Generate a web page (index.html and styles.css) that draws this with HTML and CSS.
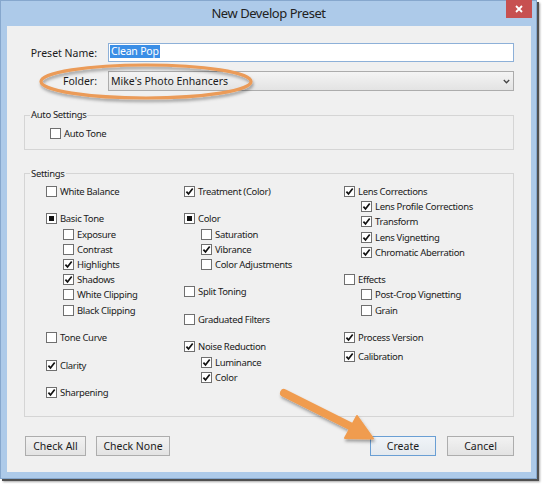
FILE: index.html
```html
<!DOCTYPE html>
<html>
<head>
<meta charset="utf-8">
<title>New Develop Preset</title>
<link rel="stylesheet" href="styles.css">
</head>
<body>
<div class="window">
  <div class="titlebar">
    <span class="title">New Develop Preset</span>
    <div class="close"><svg width="26" height="18" viewBox="0 0 26 18"><path d="M10 6 L16 12 M16 6 L10 12" stroke="#fff" stroke-width="1.8" fill="none"/></svg></div>
  </div>
  <div class="client">
    <div class="field name">
      <label>Preset Name:</label>
      <div class="input"><span class="sel">Clean Pop</span></div>
    </div>
    <div class="field folder">
      <label>Folder:</label>
      <div class="select"><span>Mike's Photo Enhancers</span><svg class="chev" width="7" height="5" viewBox="0 0 7 5"><path d="M0.8 1 L3.5 3.8 L6.2 1" stroke="#444" stroke-width="1.3" fill="none"/></svg></div>
    </div>

    <fieldset class="group auto">
      <legend>Auto Settings</legend>
      <div class="body">
        <div class="cb"><span class="box"></span><span>Auto Tone</span></div>
      </div>
    </fieldset>

    <fieldset class="group settings">
      <legend>Settings</legend>
      <div class="body">
        <div class="col">
          <div class="cb"><span class="box"></span><span>White Balance</span></div>
          <div class="cb t"><span class="box ind"></span><span>Basic Tone</span></div>
          <div class="cb s"><span class="box"></span><span>Exposure</span></div>
          <div class="cb s"><span class="box"></span><span>Contrast</span></div>
          <div class="cb s"><span class="box on"><svg viewBox="0 0 9 9"><path d="M1.4 4.6 L3.5 6.9 L7.7 1.5"/></svg></span><span>Highlights</span></div>
          <div class="cb s"><span class="box on"><svg viewBox="0 0 9 9"><path d="M1.4 4.6 L3.5 6.9 L7.7 1.5"/></svg></span><span>Shadows</span></div>
          <div class="cb s"><span class="box"></span><span>White Clipping</span></div>
          <div class="cb s"><span class="box"></span><span>Black Clipping</span></div>
          <div class="cb t"><span class="box"></span><span>Tone Curve</span></div>
          <div class="cb t"><span class="box on"><svg viewBox="0 0 9 9"><path d="M1.4 4.6 L3.5 6.9 L7.7 1.5"/></svg></span><span>Clarity</span></div>
          <div class="cb t"><span class="box on"><svg viewBox="0 0 9 9"><path d="M1.4 4.6 L3.5 6.9 L7.7 1.5"/></svg></span><span>Sharpening</span></div>
        </div>
        <div class="col">
          <div class="cb"><span class="box on"><svg viewBox="0 0 9 9"><path d="M1.4 4.6 L3.5 6.9 L7.7 1.5"/></svg></span><span>Treatment (Color)</span></div>
          <div class="cb t"><span class="box ind"></span><span>Color</span></div>
          <div class="cb s"><span class="box"></span><span>Saturation</span></div>
          <div class="cb s"><span class="box on"><svg viewBox="0 0 9 9"><path d="M1.4 4.6 L3.5 6.9 L7.7 1.5"/></svg></span><span>Vibrance</span></div>
          <div class="cb s"><span class="box"></span><span>Color Adjustments</span></div>
          <div class="cb t"><span class="box"></span><span>Split Toning</span></div>
          <div class="cb t"><span class="box"></span><span>Graduated Filters</span></div>
          <div class="cb t"><span class="box on"><svg viewBox="0 0 9 9"><path d="M1.4 4.6 L3.5 6.9 L7.7 1.5"/></svg></span><span>Noise Reduction</span></div>
          <div class="cb s"><span class="box on"><svg viewBox="0 0 9 9"><path d="M1.4 4.6 L3.5 6.9 L7.7 1.5"/></svg></span><span>Luminance</span></div>
          <div class="cb s"><span class="box on"><svg viewBox="0 0 9 9"><path d="M1.4 4.6 L3.5 6.9 L7.7 1.5"/></svg></span><span>Color</span></div>
        </div>
        <div class="col">
          <div class="cb"><span class="box on"><svg viewBox="0 0 9 9"><path d="M1.4 4.6 L3.5 6.9 L7.7 1.5"/></svg></span><span>Lens Corrections</span></div>
          <div class="cb s"><span class="box on"><svg viewBox="0 0 9 9"><path d="M1.4 4.6 L3.5 6.9 L7.7 1.5"/></svg></span><span>Lens Profile Corrections</span></div>
          <div class="cb s"><span class="box on"><svg viewBox="0 0 9 9"><path d="M1.4 4.6 L3.5 6.9 L7.7 1.5"/></svg></span><span>Transform</span></div>
          <div class="cb s"><span class="box on"><svg viewBox="0 0 9 9"><path d="M1.4 4.6 L3.5 6.9 L7.7 1.5"/></svg></span><span>Lens Vignetting</span></div>
          <div class="cb s"><span class="box on"><svg viewBox="0 0 9 9"><path d="M1.4 4.6 L3.5 6.9 L7.7 1.5"/></svg></span><span>Chromatic Aberration</span></div>
          <div class="cb t"><span class="box"></span><span>Effects</span></div>
          <div class="cb s"><span class="box"></span><span>Post-Crop Vignetting</span></div>
          <div class="cb s"><span class="box"></span><span>Grain</span></div>
          <div class="cb t"><span class="box on"><svg viewBox="0 0 9 9"><path d="M1.4 4.6 L3.5 6.9 L7.7 1.5"/></svg></span><span>Process Version</span></div>
          <div class="cb near"><span class="box on"><svg viewBox="0 0 9 9"><path d="M1.4 4.6 L3.5 6.9 L7.7 1.5"/></svg></span><span>Calibration</span></div>
        </div>
      </div>
    </fieldset>

    <div class="buttons">
      <div class="btn-group left">
        <button class="btn w61">Check All</button>
        <button class="btn w74">Check None</button>
      </div>
      <div class="btn-group right">
        <button class="btn w66 default">Create</button>
        <button class="btn w67">Cancel</button>
      </div>
    </div>
  </div>

  <svg class="annot" width="543" height="484" viewBox="0 0 543 484">
    <defs>
      <filter id="sh" x="-20%" y="-40%" width="140%" height="200%">
        <feDropShadow dx="1" dy="2.5" stdDeviation="1.4" flood-color="#000" flood-opacity="0.35"/>
      </filter>
    </defs>
    <ellipse cx="146" cy="81.5" rx="105" ry="16.5" fill="none" stroke="#eb9b58" stroke-width="3.2" filter="url(#sh)"/>
    <g filter="url(#sh)">
      <path d="M284 393 L355 428.5" stroke="#f09c4f" stroke-width="8" stroke-linecap="round" fill="none"/>
      <polygon points="357,416 373,438.5 345,438" fill="#f09c4f" stroke="#f09c4f" stroke-width="2" stroke-linejoin="round"/>
    </g>
  </svg>
</div>
</body>
</html>
```

FILE: styles.css
```css
* { box-sizing: border-box; }
html, body { margin: 0; padding: 0; background: #fff; }
body {
  width: 543px;
  height: 484px;
  overflow: hidden;
  font-family: "Noto Sans", "Open Sans", sans-serif;
  font-size: 9.5px;
  letter-spacing: -0.33px;
  color: #1b1b1b;
}
.window {
  position: relative;
  width: 537px;
  height: 479px;
  background: #adcae9;
  box-shadow: inset 0 0 0 1px #86a7cd, 2px 2px 0 #505050, 3px 3px 2px rgba(0,0,0,.35);
  display: flex;
  flex-direction: column;
}
.titlebar {
  height: 26px;
  display: flex;
  align-items: center;
  justify-content: center;
}
.title {
  font-size: 13px;
  letter-spacing: -0.45px;
  color: #222;
}
.close {
  position: absolute;
  top: 0;
  right: 5px;
  width: 26px;
  height: 18px;
  background: #c75050;
}
.close svg { display: block; }
.client {
  margin-left: 7px;
  width: 524px;
  height: 446px;
  background: #f0f0f0;
  display: flex;
  flex-direction: column;
}
.field {
  display: grid;
  grid-template-columns: 90px 406px;
  column-gap: 11px;
  align-items: center;
}
.field label {
  text-align: right;
  font-size: 10.5px;
  letter-spacing: 0;
}
.field.name { margin-top: 17px; height: 19px; }
.field.folder { margin-top: 9px; height: 20px; }
.input {
  height: 19px;
  border: 1px solid #8db0d8;
  background: #fff;
  padding: 1px 0 0 1px;
}
.sel {
  display: inline-block;
  vertical-align: top;
  height: 13px;
  line-height: 13px;
  padding: 0 1px;
  background: #3a8ee6;
  color: #fff;
  font-size: 10.5px;
  letter-spacing: -0.2px;
}
.select {
  height: 20px;
  border: 1px solid #acacac;
  background: linear-gradient(#f4f4f4, #e3e3e3);
  display: flex;
  align-items: center;
  justify-content: space-between;
  padding: 0 3px 0 2px;
  font-size: 10.5px;
  letter-spacing: 0;
}
.chev { display: block; }

fieldset.group {
  margin: 18px 0 0 17px;
  width: 490px;
  border: 1px solid #d5d5d5;
  padding: 0;
  min-width: 0;
}
legend {
  margin-left: 5px;
  padding: 0 1px;
  height: 12px;
  line-height: 12px;
}
.auto .body { padding: 4.9px 0 7.9px 25px; }
.settings .body {
  padding: 3.9px 0 15.7px 21px;
  display: grid;
  grid-template-columns: 138px 160px 1fr;
}
.col { display: flex; flex-direction: column; }
.cb {
  display: flex;
  align-items: center;
  gap: 3px;
  height: 15.2px;
  white-space: nowrap;
}
.cb.t { margin-top: 12.3px; }
.cb.s { margin-left: 17px; }
.cb.near { margin-top: 4.1px; }
.box {
  width: 11px;
  height: 11px;
  flex: none;
  border: 1px solid #6f6f6f;
  background: #fff;
  display: flex;
  align-items: center;
  justify-content: center;
}
.box svg {
  width: 9px;
  height: 9px;
  display: block;
}
.box svg path {
  fill: none;
  stroke: #111;
  stroke-width: 1.7;
}
.box.ind::after {
  content: "";
  width: 5px;
  height: 5px;
  background: #111;
}

.buttons {
  margin-top: 19px;
  padding: 0 17px 0 18px;
  display: flex;
  justify-content: space-between;
}
.btn-group { display: flex; }
.btn-group.left { gap: 10px; }
.btn-group.right { gap: 11px; }
.btn {
  height: 20px;
  padding: 0;
  border: 1px solid #adadad;
  background: linear-gradient(#f2f2f2, #e3e3e3);
  font-family: inherit;
  font-size: 10.5px;
  letter-spacing: 0;
  color: #1b1b1b;
}
.btn.default { border-color: #6a9fd4; background: linear-gradient(#f0f4f8, #e4e9ee); }
.w61 { width: 61px; }
.w74 { width: 74px; }
.w66 { width: 66px; }
.w67 { width: 67px; }

.annot {
  position: absolute;
  left: 0;
  top: 0;
  pointer-events: none;
  overflow: visible;
}
```
